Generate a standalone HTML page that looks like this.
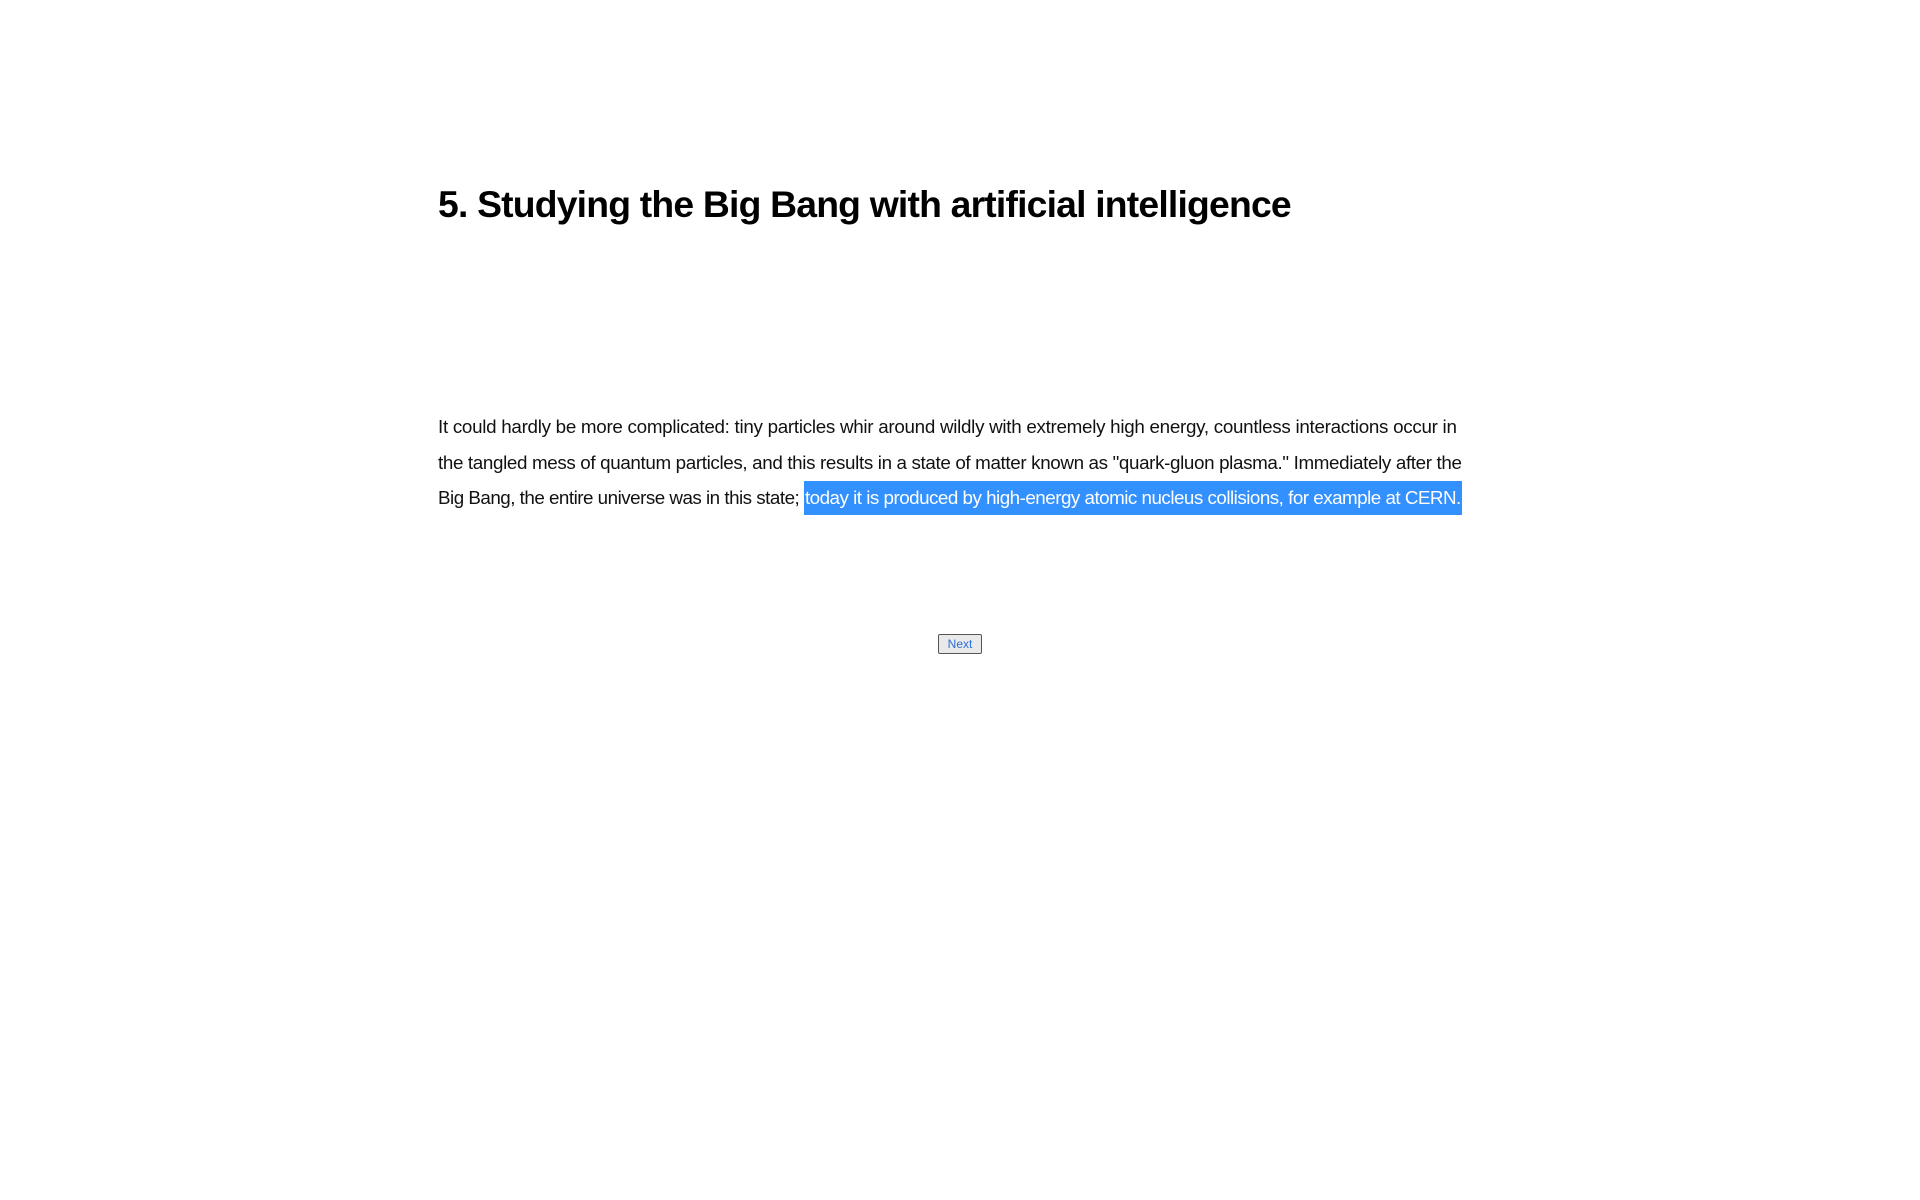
<!DOCTYPE html>
<html><head><style>
html,body{margin:0;background:#fff;width:1920px;height:1200px;overflow:hidden}
h1{position:absolute;left:438px;top:178px;margin:0;font:bold 37.3px/52px "Liberation Sans",sans-serif;color:#000;letter-spacing:-0.8px;white-space:nowrap}
p{position:absolute;left:438px;top:409px;width:1100px;margin:0;font:18.8px/35.7px "Liberation Sans",sans-serif;color:#111;letter-spacing:-0.35px;white-space:nowrap}
.l1{letter-spacing:-0.28px}
.l3{letter-spacing:-0.5px}
.s{background:#3390ff;color:#fff;padding:6px 1px 7px 1px}
button{position:absolute;left:938px;top:634px;width:44px;height:20px;padding:0;border:1px solid #555;border-radius:2px;background:#e9e9e9;color:#2a6fe0;font:12px "Liberation Sans",sans-serif}
</style></head><body>
<h1>5. Studying the Big Bang with artificial intelligence</h1>
<p><span class="l1">It could hardly be more complicated: tiny particles whir around wildly with extremely high energy, countless interactions occur in</span><br>the tangled mess of quantum particles, and this results in a state of matter known as "quark-gluon plasma." Immediately after the<br><span class="l3">Big Bang, the entire universe was in this state; <span class="s">today it is produced by high-energy atomic nucleus collisions, for example at CERN.</span></span></p>
<button>Next</button>
</body></html>
